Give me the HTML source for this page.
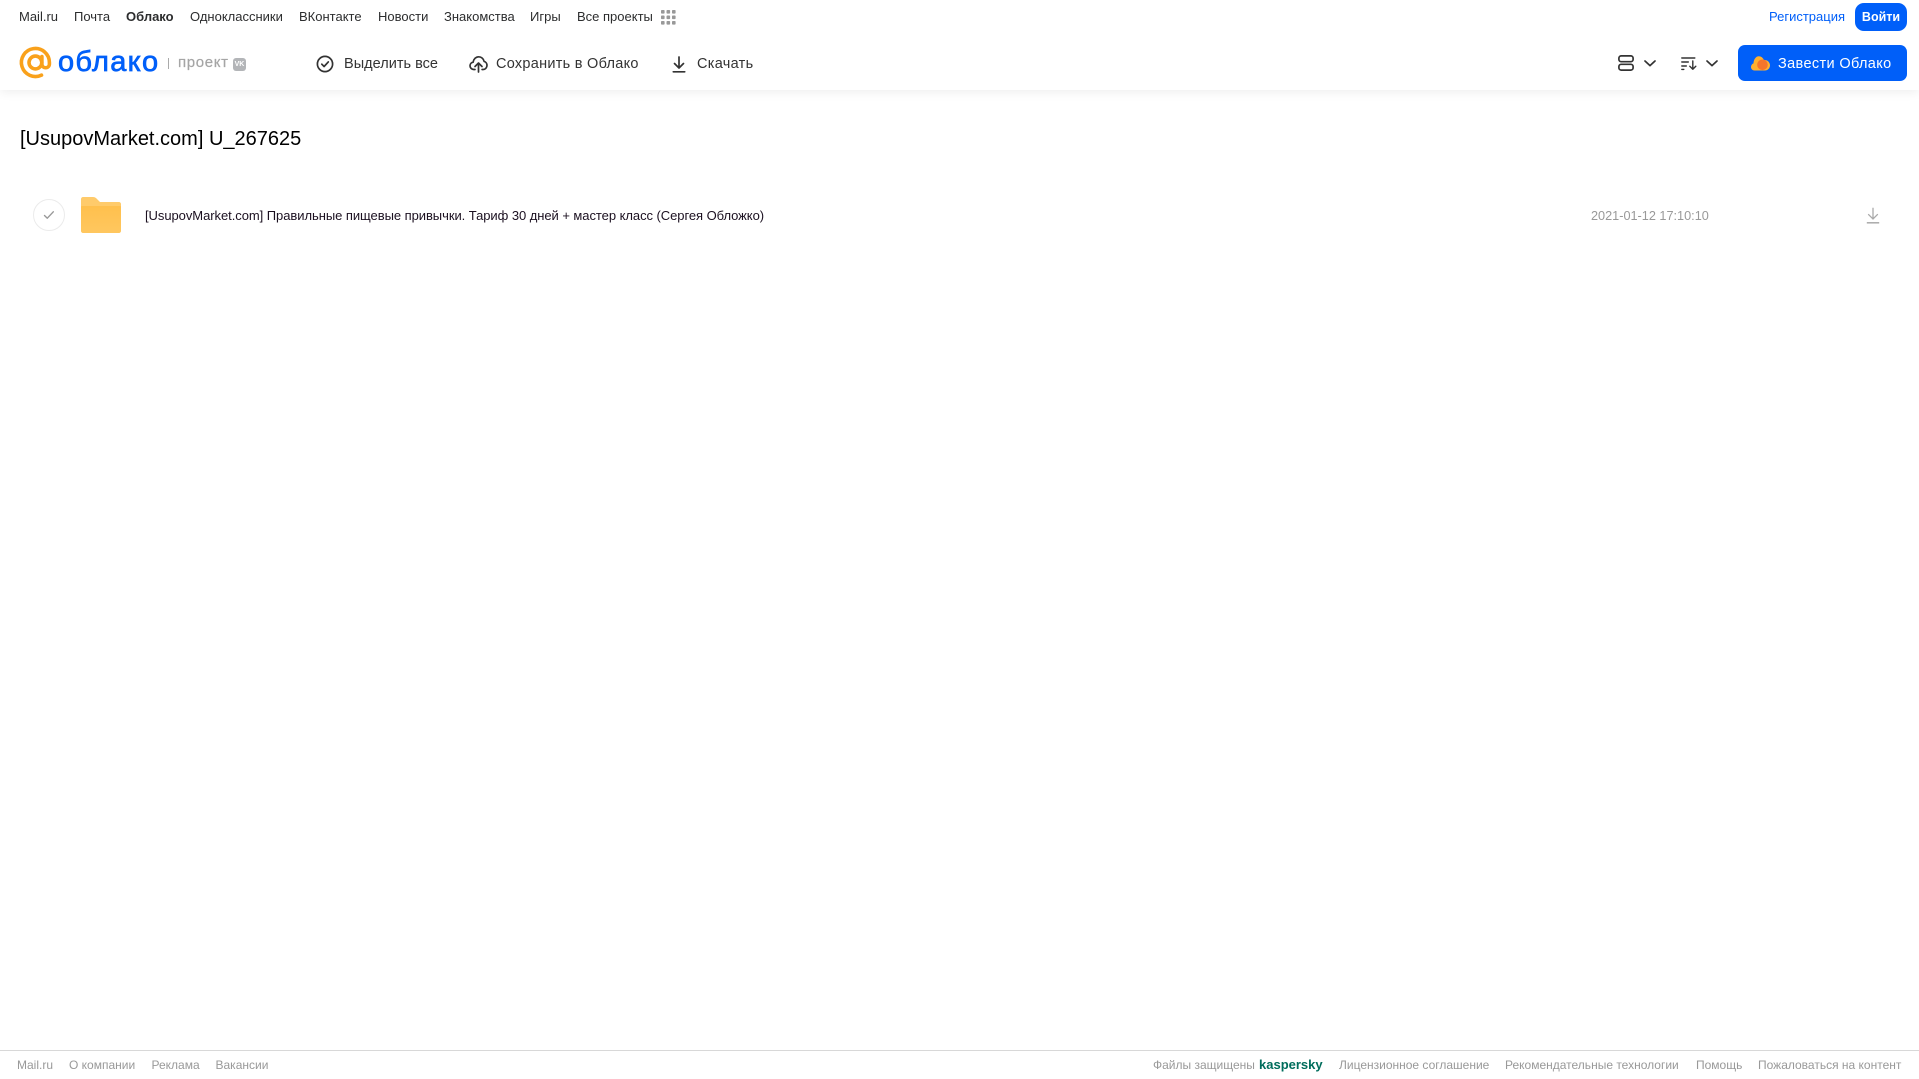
<!DOCTYPE html>
<html lang="ru"><head><meta charset="utf-8"><title>Облако</title>
<style>
html,body{margin:0;padding:0;background:#fff;width:1919px;height:1079px;overflow:hidden}
body{position:relative;font-family:"Liberation Sans",Arial,sans-serif;color:#333}
.t{position:absolute;white-space:nowrap;line-height:16px}
.n{top:9px;font-size:13px;color:#2c2d2e}
.a{top:55px;font-size:14.5px;line-height:18px;color:#333;letter-spacing:.3px}
.f{top:1057px;font-size:12px;color:#999}
svg{position:absolute;overflow:visible}
#hd{position:absolute;left:0;top:0;width:1919px;height:90px;background:#fff;box-shadow:0 2px 10px rgba(0,0,0,.07)}
</style></head><body>
<div id="hd"></div>
<span class="t n" style="left:19px">Mail.ru</span>
<span class="t n" style="left:74px">Почта</span>
<span class="t n" style="left:126px;font-weight:bold">Облако</span>
<span class="t n" style="left:190px">Одноклассники</span>
<span class="t n" style="left:299px">ВКонтакте</span>
<span class="t n" style="left:378px">Новости</span>
<span class="t n" style="left:444px">Знакомства</span>
<span class="t n" style="left:530px">Игры</span>
<span class="t n" style="left:577px">Все проекты</span>
<svg style="left:661px;top:10px" width="15" height="15" fill="#999"><rect x="0" y="0" width="3.6" height="3.6" rx=".8"/><rect x="5.5" y="0" width="3.6" height="3.6" rx=".8"/><rect x="11" y="0" width="3.6" height="3.6" rx=".8"/><rect x="0" y="5.5" width="3.6" height="3.6" rx=".8"/><rect x="5.5" y="5.5" width="3.6" height="3.6" rx=".8"/><rect x="11" y="5.5" width="3.6" height="3.6" rx=".8"/><rect x="0" y="11" width="3.6" height="3.6" rx=".8"/><rect x="5.5" y="11" width="3.6" height="3.6" rx=".8"/><rect x="11" y="11" width="3.6" height="3.6" rx=".8"/></svg>
<span class="t" style="left:1769px;top:9px;font-size:13px;color:#005ff9">Регистрация</span>
<div style="position:absolute;left:1855px;top:3px;width:52px;height:28px;border-radius:9px;background:#005ff9;color:#fff;font-size:12.5px;line-height:28px;text-align:center;font-weight:bold">Войти</div>

<svg style="left:19px;top:47px" width="33" height="32" viewBox="0 0 33 32" fill="none" stroke="#f9a11b" stroke-width="3.6" stroke-linecap="round"><circle cx="16.4" cy="15.5" r="6.4"/><path d="M22.9 9.500V17a3.700 3.700 0 0 0 7.500 0V15.500A14 14 0 1 0 22.500 28.100"/></svg>
<span class="t" style="left:58px;top:44px;font-size:29px;line-height:36px;color:#005ff9;letter-spacing:1.300px;-webkit-text-stroke:.7px #005ff9">облако</span>
<div style="position:absolute;left:168px;top:58px;width:1px;height:11px;background:#aaa"></div>
<span class="t" style="left:178px;top:54px;font-size:15px;line-height:18px;color:#a5a5a5;letter-spacing:.65px;-webkit-text-stroke:.2px #a5a5a5">проект</span>
<div style="position:absolute;left:233px;top:58px;width:13px;height:13px;border-radius:3px;background:#b3b5b8;color:#fff;font-size:7px;font-weight:bold;line-height:13px;text-align:center">VK</div>

<svg style="left:316px;top:55px" width="18" height="18" viewBox="0 0 18 18" fill="none" stroke="#333" stroke-width="1.700"><circle cx="9" cy="9" r="7.600"/><path d="M5.800 9.200l2.300 2.300 4.200-4.600" stroke-linecap="round" stroke-linejoin="round"/></svg>
<span class="t a" style="left:344px;letter-spacing:.02px">Выделить все</span>
<svg style="left:469px;top:55px" width="19" height="18" viewBox="0 0 19 18" fill="none" stroke="#333" stroke-width="1.700" stroke-linecap="round" stroke-linejoin="round"><path d="M6 14.500H4.800C2.700 14.500 1 12.800 1 10.800c0-1.800 1.300-3.300 3.100-3.600C4.600 4 7 1.800 9.700 1.800c2.700 0 4.900 2 5.400 4.600 1.700.4 2.900 2.100 2.900 4 0 2.200-1.700 4.100-3.900 4.100h-1"/><path d="M9.500 17V8.500M6 11.500l3.500-3.500 3.500 3.500"/></svg>
<span class="t a" style="left:496px;letter-spacing:.27px">Сохранить в Облако</span>
<svg style="left:672px;top:56px" width="14" height="17" viewBox="0 0 14 17" fill="none" stroke="#333" stroke-width="1.700" stroke-linecap="round" stroke-linejoin="round"><path d="M7 1v10.500M2.500 7.500L7 12l4.500-4.500"/><path d="M1.300 15.800h11.400"/></svg>
<span class="t a" style="left:697px">Скачать</span>

<svg style="left:1618px;top:55px" width="16" height="16" viewBox="0 0 16 16" fill="none" stroke="#333" stroke-width="1.700"><rect x=".9" y=".9" width="14.200" height="5.800" rx="2.200"/><rect x=".9" y="9.300" width="14.200" height="5.800" rx="2.200"/></svg>
<svg style="left:1644px;top:60px" width="12" height="7" viewBox="0 0 12 7" fill="none" stroke="#333" stroke-width="1.700" stroke-linecap="round" stroke-linejoin="round"><path d="M1 1l5 4.600L11 1"/></svg>
<svg style="left:1681px;top:57px" width="16" height="13" viewBox="0 0 16 13" fill="none" stroke="#333" stroke-width="1.400" stroke-linecap="round" stroke-linejoin="round"><path d="M.8 1h13M.8 5h6.500M.8 9h4.500M.8 12.400h2M11.800 4v8M8.800 9.200l3 3 3-3"/></svg>
<svg style="left:1706px;top:60px" width="12" height="7" viewBox="0 0 12 7" fill="none" stroke="#333" stroke-width="1.700" stroke-linecap="round" stroke-linejoin="round"><path d="M1 1l5 4.600L11 1"/></svg>
<div style="position:absolute;left:1738px;top:45px;width:169px;height:36px;border-radius:7px;background:#005ff9"></div>
<svg style="left:1751px;top:56px" width="19" height="15" viewBox="0 0 19 15"><path d="M3.500 14.500C1.500 14.500 0 13 0 11c0-1.700 1-3.100 2.500-3.600C2.700 3.500 4.800 .3 7.800 .3c2.300 0 4.200 1.500 5 3.700 3.200-.4 6.200 2 6.200 5.400 0 2.900-2.300 5.100-5 5.100z" fill="#ffb02e"/><circle cx="11.500" cy="8.800" r="5.300" fill="#f5752b"/></svg>
<span class="t" style="left:1778px;top:55px;font-size:14.500px;line-height:18px;color:#fff;letter-spacing:.36px">Завести Облако</span>

<span class="t" style="left:20px;top:126px;font-size:20px;line-height:26px;color:#000">[UsupovMarket.com] U_267625</span>

<div style="position:absolute;left:33px;top:199px;width:30px;height:30px;border:1px solid #ebebeb;border-radius:50%"></div>
<svg style="left:43px;top:210px" width="12" height="10" viewBox="0 0 12 10" fill="none" stroke="#999" stroke-width="1.400" stroke-linecap="round" stroke-linejoin="round"><path d="M1.500 5.500l2.800 2.700 6-6.400"/></svg>
<svg style="left:81px;top:197px" width="40" height="36" viewBox="0 0 40 36"><defs><linearGradient id="g" x1="0" y1="0" x2="0" y2="1"><stop offset="0" stop-color="#ffc04d"/><stop offset="1" stop-color="#ffc75f"/></linearGradient></defs><path d="M2 0h10c1.500 0 2.500.5 3.500 1.500L19 5h19c1.100 0 2 .9 2 2v5H0V2C0 .9.900 0 2 0z" fill="#ffcb6b"/><path d="M0 10c0-.6.400-1 1-1h38c.6 0 1 .4 1 1v24c0 1.100-.9 2-2 2H2c-1.100 0-2-.9-2-2z" fill="url(#g)"/></svg>
<span class="t" style="left:145px;top:208px;font-size:13px;color:#1b1020;letter-spacing:-.055px">[UsupovMarket.com] Правильные пищевые привычки. Тариф 30 дней + мастер класс (Сергея Обложко)</span>
<span class="t" style="left:1591px;top:208px;font-size:12.700px;color:#999">2021-01-12 17:10:10</span>
<svg style="left:1866px;top:207px" width="14" height="17" viewBox="0 0 14 17" fill="none" stroke="#aaa" stroke-width="1.300"><path d="M7 .8v11M2.200 7.200L7 12l4.800-4.800"/><path d="M.8 15.800h12.400" stroke-width="1.500"/></svg>

<div style="position:absolute;left:0;top:1050px;width:1919px;height:1px;background:#d8d8d8"></div>
<span class="t f" style="left:17px">Mail.ru</span>
<span class="t f" style="left:69px">О компании</span>
<span class="t f" style="left:151.500px">Реклама</span>
<span class="t f" style="left:215.500px">Вакансии</span>
<span class="t f" style="left:1153px">Файлы защищены</span>
<span class="t f" style="left:1259px;font-size:13px;font-weight:bold;color:#006d5c">kaspersky</span>
<span class="t f" style="left:1339px">Лицензионное соглашение</span>
<span class="t f" style="left:1505px">Рекомендательные технологии</span>
<span class="t f" style="left:1696px">Помощь</span>
<span class="t f" style="left:1758px">Пожаловаться на контент</span>
</body></html>
